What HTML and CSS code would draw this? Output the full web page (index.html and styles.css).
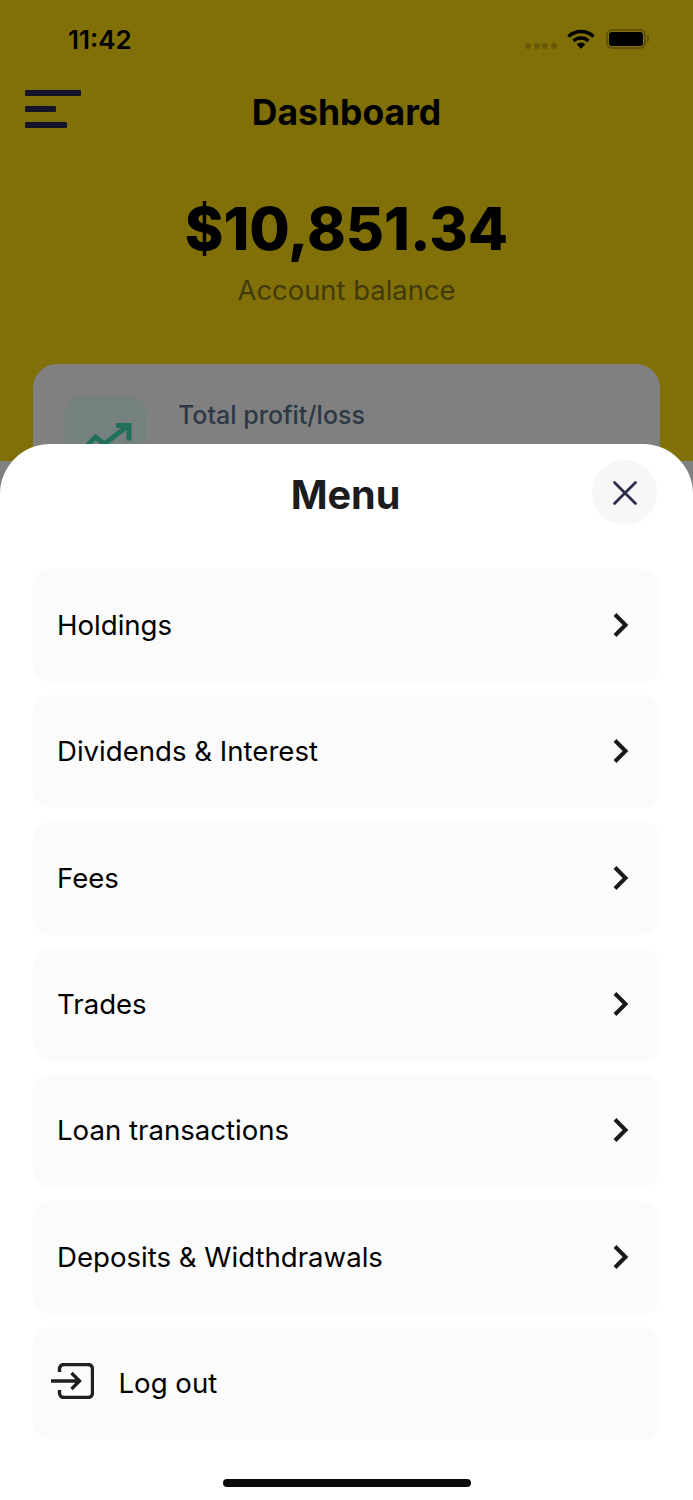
FILE: index.html
```html
<!DOCTYPE html>
<html lang="en">
<head>
    <meta charset="UTF-8">
    <title>Dashboard</title>
    <link rel="stylesheet" href="styles.css">
</head>
<body>

<div class="screen">
    <div class="dashboard">
        <div class="status-bar">
            <span class="time">11:42</span>
            <div class="status-icons">
                <div class="signal"><i></i><i></i><i></i><i></i></div>
                <svg class="wifi" width="28" height="20" viewBox="0 0 28 20">
                    <path d="M1.500 7.500a18 18 0 0 1 25 0" fill="none" stroke="#000" stroke-width="3.600"/>
                    <path d="M6.500 12a11 11 0 0 1 15 0" fill="none" stroke="#000" stroke-width="3.600"/>
                    <path d="M9.600 15.200a6.400 6.400 0 0 1 8.800 0L14 19.800z" fill="#000"/>
                </svg>
                <div class="battery"><div class="battery-fill"></div></div>
                <div class="battery-cap"></div>
            </div>
        </div>

        <div class="nav">
            <div class="burger"><i class="long"></i><i class="short"></i><i class="mid"></i></div>
            <h1>Dashboard</h1>
        </div>

        <div class="balance">
            <div class="amount">$10,851.34</div>
            <div class="balance-label">Account balance</div>
        </div>

        <div class="profit-card">
            <div class="profit-icon">
                <svg width="52" height="36" viewBox="0 0 52 36">
                    <path d="M3 30L15.500 17l9 7L47 6.500" fill="none" stroke="#1f6f5a" stroke-width="5"/>
                    <path d="M36 5.500h13v15" fill="none" stroke="#1f6f5a" stroke-width="5"/>
                </svg>
            </div>
            <div class="profit-title">Total profit/loss</div>
        </div>
    </div>

    <div class="sheet">
        <div class="sheet-head">
            <h2>Menu</h2>
            <div class="close">
                <svg width="26" height="26" viewBox="0 0 26 26">
                    <path d="M2.500 2.500l21 21M23.500 2.500l-21 21" stroke="#2b2b4b" stroke-width="2.800" stroke-linecap="round"/>
                </svg>
            </div>
        </div>

        <div class="menu">
            <div class="menu-row"><span>Holdings</span><svg class="chevron" width="18" height="26" viewBox="0 0 18 26"><path d="M3 2.500L13.500 13 3 23.500" fill="none" stroke="#1a1a1a" stroke-width="4"/></svg></div>
            <div class="menu-row"><span>Dividends &amp; Interest</span><svg class="chevron" width="18" height="26" viewBox="0 0 18 26"><path d="M3 2.500L13.500 13 3 23.500" fill="none" stroke="#1a1a1a" stroke-width="4"/></svg></div>
            <div class="menu-row"><span>Fees</span><svg class="chevron" width="18" height="26" viewBox="0 0 18 26"><path d="M3 2.500L13.500 13 3 23.500" fill="none" stroke="#1a1a1a" stroke-width="4"/></svg></div>
            <div class="menu-row"><span>Trades</span><svg class="chevron" width="18" height="26" viewBox="0 0 18 26"><path d="M3 2.500L13.500 13 3 23.500" fill="none" stroke="#1a1a1a" stroke-width="4"/></svg></div>
            <div class="menu-row"><span>Loan transactions</span><svg class="chevron" width="18" height="26" viewBox="0 0 18 26"><path d="M3 2.500L13.500 13 3 23.500" fill="none" stroke="#1a1a1a" stroke-width="4"/></svg></div>
            <div class="menu-row"><span>Deposits &amp; Widthdrawals</span><svg class="chevron" width="18" height="26" viewBox="0 0 18 26"><path d="M3 2.500L13.500 13 3 23.500" fill="none" stroke="#1a1a1a" stroke-width="4"/></svg></div>
            <div class="menu-row logout">
                <svg class="logout-icon" width="44" height="36" viewBox="0 0 44 36">
                    <path d="M9.500 9V6a4.500 4.500 0 0 1 4.500-4.500h24a4.500 4.500 0 0 1 4.500 4.500v24a4.500 4.500 0 0 1-4.500 4.500H14A4.500 4.500 0 0 1 9.500 30v-3" fill="none" stroke="#1f1f1f" stroke-width="3.400"/>
                    <path d="M1 18h28M21.500 10l8 8-8 8" fill="none" stroke="#1f1f1f" stroke-width="3.400"/>
                </svg>
                <span>Log out</span>
            </div>
        </div>

        <div class="home-bar"></div>
    </div>
</div>

</body>
</html>
```

FILE: styles.css
```css
* {
    box-sizing: border-box;
}
body {
    margin: 0;
    font-family: Inter, "Liberation Sans", sans-serif;
    background: #808080;
}
.screen {
    position: relative;
    width: 693px;
    height: 1500px;
    overflow: hidden;
    background: #808080;
}
.dashboard {
    height: 461px;
    overflow: hidden;
    background: #807007;
    padding-top: 24px;
}
.status-bar {
    display: flex;
    justify-content: space-between;
    align-items: center;
    height: 30px;
    padding: 0 44px 0 68px;
}
.time {
    font-size: 26px;
    font-weight: 600;
    color: #000;
}
.status-icons {
    display: flex;
    align-items: center;
    margin-top: -1px;
}
.signal {
    display: flex;
    gap: 2.600px;
    margin: 14px 10px 0 0;
}
.signal i {
    width: 6px;
    height: 6px;
    border-radius: 50%;
    background: #665a06;
}
.battery {
    width: 40px;
    height: 20px;
    margin-left: 11px;
    padding: 1px;
    border: 2px solid #5f5405;
    border-radius: 6px;
}
.battery-fill {
    height: 100%;
    background: #000;
    border-radius: 3px;
}
.battery-cap {
    width: 2px;
    height: 7px;
    margin-left: 1px;
    background: #5f5405;
    border-radius: 0 2px 2px 0;
}
.nav {
    position: relative;
    margin-top: 24px;
    height: 70px;
}
.nav h1 {
    margin: 0;
    text-align: center;
    font-size: 35.500px;
    line-height: 70px;
    font-weight: 700;
    color: #000;
}
.burger {
    position: absolute;
    left: 24.500px;
    top: 12px;
    display: flex;
    flex-direction: column;
    gap: 10.500px;
}
.burger i {
    display: block;
    height: 5.500px;
    background: #14142b;
    border-radius: 1px;
}
.burger .long {
    width: 56.500px;
}
.burger .short {
    width: 31px;
}
.burger .mid {
    width: 42px;
}
.balance {
    margin-top: 47px;
    text-align: center;
}
.amount {
    font-size: 58.600px;
    line-height: 68px;
    font-weight: 800;
    color: #000;
}
.balance-label {
    margin-top: 10px;
    font-size: 27.400px;
    line-height: 34px;
    color: #423a0c;
}
.profit-card {
    display: flex;
    gap: 32px;
    margin: 57px 33px 0;
    height: 200px;
    padding: 32px;
    background: #808080;
    border-radius: 24px;
}
.profit-icon {
    display: flex;
    justify-content: center;
    padding-top: 24px;
    width: 81px;
    height: 81px;
    background: #75817e;
    border-radius: 16px;
}
.profit-title {
    margin-top: 2px;
    font-size: 25px;
    line-height: 34px;
    font-weight: 500;
    color: #2c3846;
}
.sheet {
    position: absolute;
    top: 444px;
    left: 0;
    right: 0;
    bottom: 0;
    background: #fff;
    border-radius: 50px 50px 0 0;
}
.sheet-head {
    position: relative;
    height: 125px;
}
.sheet-head h2 {
    margin: 0 2px 0 0;
    padding-top: 25px;
    text-align: center;
    font-size: 39.600px;
    line-height: 52px;
    font-weight: 700;
    color: #1c1c1c;
}
.close {
    position: absolute;
    top: 16px;
    right: 36px;
    width: 65px;
    height: 65px;
    display: flex;
    align-items: center;
    justify-content: center;
    background: #f7f7f8;
    border-radius: 50%;
}
.menu {
    display: flex;
    flex-direction: column;
    gap: 13.330px;
    padding: 0 33px;
}
.menu-row {
    display: flex;
    align-items: center;
    justify-content: space-between;
    height: 113px;
    padding: 0 30px 1px 24px;
    background: #fbfbfb;
    border-radius: 18px;
    font-size: 27.600px;
    color: #000;
}
.menu-row.logout {
    justify-content: flex-start;
    gap: 24.500px;
    padding-left: 17px;
}
.logout-icon {
    margin-top: -3px;
}
.home-bar {
    position: absolute;
    left: 223px;
    bottom: 13px;
    width: 248px;
    height: 8px;
    background: #0a0a0a;
    border-radius: 4px;
}
```
